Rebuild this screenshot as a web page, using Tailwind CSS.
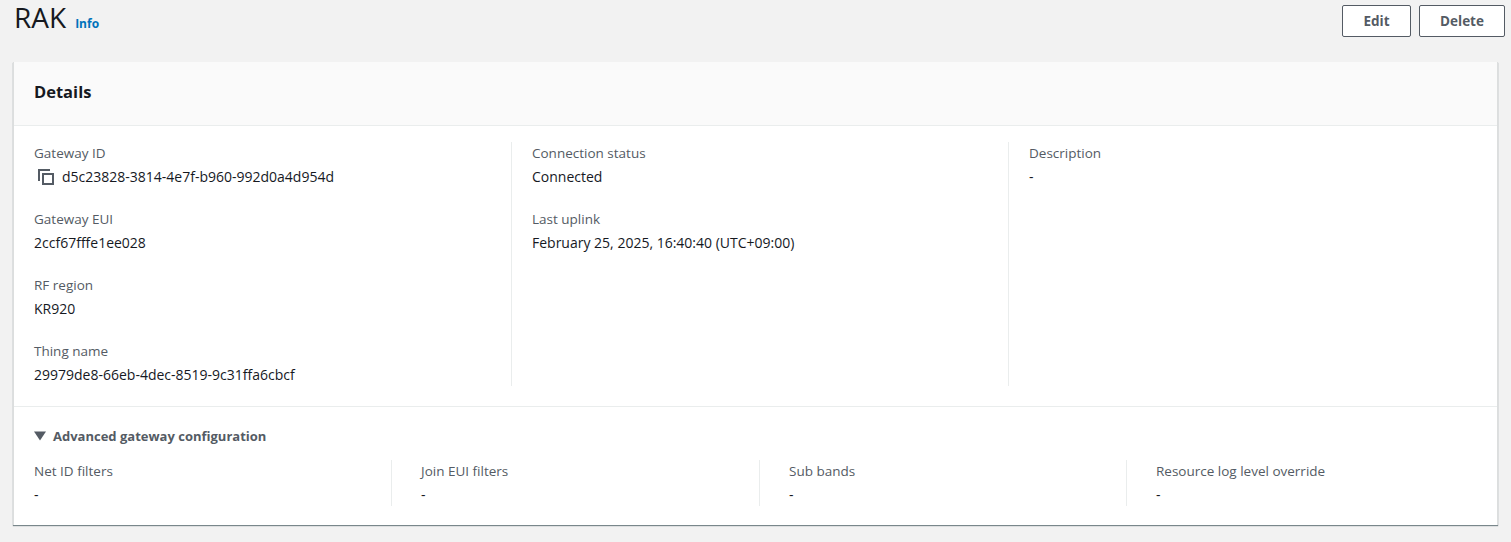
<!DOCTYPE html>
<html lang="en">
<head>
    <meta charset="UTF-8">
    <title>RAK</title>
    <script src="https://cdn.jsdelivr.net/npm/@tailwindcss/browser@4"></script>
</head>
<body class="bg-[#f2f2f2] text-[#16191f] font-['Open_Sans',sans-serif] text-[14px] leading-[22px] h-[542px] overflow-hidden">
    <div class="flex justify-between items-start pl-[14px] pr-[6px] pt-[5px] h-[62px]">
        <div class="flex items-baseline gap-[9px] -mt-[2px]">
            <h1 class="text-[28px] leading-[28px] font-normal">RAK</h1>
            <a href="#" class="text-[12px] font-bold text-[#0073bb]">Info</a>
        </div>
        <div class="flex gap-2">
            <button class="w-[69px] h-[32px] bg-white border border-[#545b64] rounded-[2px] text-[13.5px] font-bold text-[#545b64]">Edit</button>
            <button class="w-[86px] h-[32px] bg-white border border-[#545b64] rounded-[2px] text-[13.5px] font-bold text-[#545b64]">Delete</button>
        </div>
    </div>

    <section class="ml-[13px] w-[1485px] h-[463px] bg-white border-l border-r border-[#dcdede] shadow-[0_1px_1px_0_rgba(0,28,36,0.5)]">
        <div class="h-[64px] bg-[#fafafa] border-b border-[#eaeded] flex items-center px-5 pb-[3px]">
            <h2 class="text-[16.5px] font-bold">Details</h2>
        </div>
        <div class="grid grid-cols-[498px_497px_1fr] h-[281px] pt-[16px] pb-[20px] border-b border-[#eaeded]">
            <div class="px-5 flex flex-col gap-[20px] border-r border-[#eaeded]">
                <div>
                    <div class="text-[13.5px] text-[#545b64]">Gateway ID</div>
                    <div class="flex items-center gap-[8px] pl-[4px] mt-[2px] h-[22px]">
                        <svg class="w-[16px] h-[16px]" viewBox="0 0 16 16" fill="none" stroke="#545b64" stroke-width="2"><path d="M1 12V1h11"/><rect x="5" y="5" width="10" height="10"/></svg>
                        <span>d5c23828-3814-4e7f-b960-992d0a4d954d</span>
                    </div>
                </div>
                <div><div class="text-[13.5px] text-[#545b64]">Gateway EUI</div><div class="mt-[2px]">2ccf67fffe1ee028</div></div>
                <div><div class="text-[13.5px] text-[#545b64]">RF region</div><div class="mt-[2px]">KR920</div></div>
                <div><div class="text-[13.5px] text-[#545b64]">Thing name</div><div class="mt-[2px]">29979de8-66eb-4dec-8519-9c31ffa6cbcf</div></div>
            </div>
            <div class="px-5 flex flex-col gap-[20px] border-r border-[#eaeded]">
                <div><div class="text-[13.5px] text-[#545b64]">Connection status</div><div class="mt-[2px]">Connected</div></div>
                <div><div class="text-[13.5px] text-[#545b64]">Last uplink</div><div class="mt-[2px]">February 25, 2025, 16:40:40 (UTC+09:00)</div></div>
            </div>
            <div class="px-5">
                <div class="text-[13.5px] text-[#545b64]">Description</div>
                <div class="mt-[2px]">-</div>
            </div>
        </div>
        <div class="px-5 pt-[18px]">
            <div class="flex items-center gap-[7px] text-[13px] font-bold text-[#545b64]">
                <svg class="w-[12px] h-[12px]" viewBox="0 0 12 12" fill="#545b64"><path d="M0 1.5h12L6 10.5z"/></svg>
                <span>Advanced gateway configuration</span>
            </div>
            <div class="grid grid-cols-[358px_368px_367px_1fr] mt-[13px] h-[46px] -mr-5">
                <div class="border-r border-[#eaeded]"><div class="text-[13.5px] text-[#545b64]">Net ID filters</div><div class="mt-[2px]">-</div></div>
                <div class="pl-[29px] border-r border-[#eaeded]"><div class="text-[13.5px] text-[#545b64]">Join EUI filters</div><div class="mt-[2px]">-</div></div>
                <div class="pl-[29px] border-r border-[#eaeded]"><div class="text-[13.5px] text-[#545b64]">Sub bands</div><div class="mt-[2px]">-</div></div>
                <div class="pl-[29px]"><div class="text-[13.5px] text-[#545b64]">Resource log level override</div><div class="mt-[2px]">-</div></div>
            </div>
        </div>
    </section>
</body>
</html>
